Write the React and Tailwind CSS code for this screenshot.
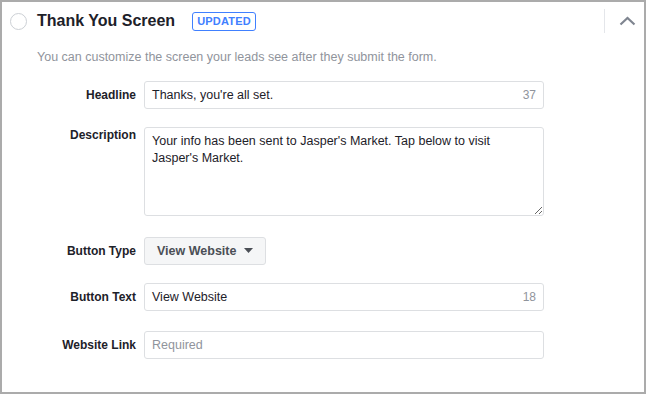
import React from "react";

const font = { fontFamily: '"Liberation Sans", Arial, sans-serif' };

function Row({ label, top, children }) {
  return (
    <div className={`flex ${top ? "items-start" : "items-center"} gap-2`}>
      <div
        className={`w-[134px] shrink-0 text-right text-[12px] font-bold leading-[16px] text-[#1d2129] ${top ? "pt-[0px]" : ""}`}
      >
        {label}
      </div>
      {children}
    </div>
  );
}

function Input({ value, placeholder, count }) {
  return (
    <div className="flex h-[28px] w-[400px] items-center justify-between rounded-[3px] border border-[#dddfe2] bg-white px-[7px]">
      {value ? (
        <span className="text-[12.5px] leading-[16px] text-[#1d2129]">{value}</span>
      ) : (
        <span className="text-[12.5px] leading-[16px] text-[#90949c]">{placeholder}</span>
      )}
      {count && <span className="text-[12px] leading-[16px] text-[#90949c]">{count}</span>}
    </div>
  );
}

export default function App() {
  return (
    <div style={font} className="h-[394px] w-[646px] bg-white">
      <div className="h-full w-full border-2 border-[#ababab] bg-white">
        <div className="flex h-[38px] items-center pl-[8px] pr-[8px]">
          <div className="h-[17px] w-[17px] rounded-full border-[1.5px] border-[#ccd0d5]" />
          <div className="ml-[10px] text-[16px] font-bold text-[#1d2129]">Thank You Screen</div>
          <div className="ml-[17px] flex h-[19px] items-center rounded-[3px] border border-[#4080ff] px-[4px] text-[11px] font-bold tracking-[0.2px] text-[#4080ff]">
            UPDATED
          </div>
          <div className="ml-auto h-[24px] w-px bg-[#e4e6ea]" />
          <div className="ml-[13px] flex h-[24px] w-[18px] items-center justify-center">
            <svg width="17" height="10" viewBox="0 0 17 10">
              <path d="M1.5 8.5 L8.5 2 L15.5 8.5" fill="none" stroke="#7f8590" strokeWidth="2.2" />
            </svg>
          </div>
        </div>
        <div className="ml-[35px] mt-[8px] text-[12.5px] text-[#90949c]">
          You can customize the screen your leads see after they submit the form.
        </div>
        <div className="mt-[14px] flex flex-col">
          <Row label="Headline">
            <Input value="Thanks, you're all set." count="37" />
          </Row>
          <div className="h-[18px]" />
          <Row label="Description" top>
            <textarea
              className="h-[89px] w-[400px] resize-y rounded-[3px] border border-[#dddfe2] px-[7px] py-[5px] text-[12.5px] leading-[17px] text-[#1d2129] outline-none"
              style={font}
              defaultValue="Your info has been sent to Jasper's Market. Tap below to visit Jasper's Market."
            />
          </Row>
          <div className="h-[21px]" />
          <Row label="Button Type">
            <div className="flex h-[28px] w-[122px] items-center rounded-[3px] border border-[#dddfe2] bg-[#f5f6f7] pl-[12px]">
              <span className="text-[12.5px] font-bold leading-[16px] text-[#4b4f56]">View Website</span>
              <svg className="ml-[8px]" width="9" height="5" viewBox="0 0 9 5">
                <path d="M0 0 L9 0 L4.5 5 Z" fill="#4b4f56" />
              </svg>
            </div>
          </Row>
          <div className="h-[18px]" />
          <Row label="Button Text">
            <Input value="View Website" count="18" />
          </Row>
          <div className="h-[20px]" />
          <Row label="Website Link">
            <Input placeholder="Required" />
          </Row>
        </div>
      </div>
    </div>
  );
}
